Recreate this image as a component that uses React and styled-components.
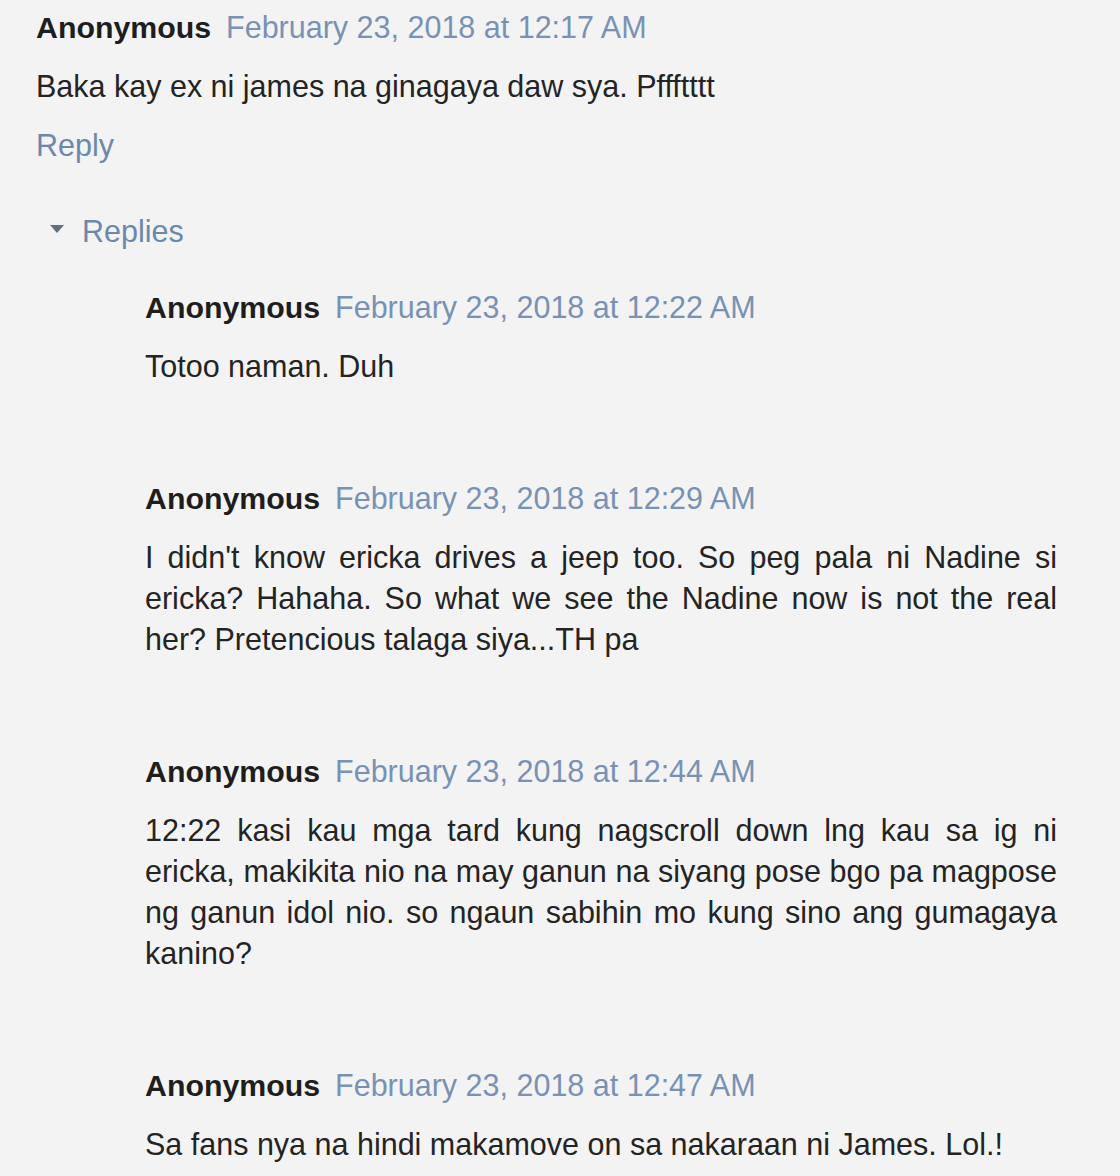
import React from "react";
import styled, { createGlobalStyle } from "styled-components";

const GlobalStyle = createGlobalStyle`
  html, body {
    margin: 0;
    padding: 0;
    background: #f3f3f3;
  }
  body {
    font-family: "Liberation Sans", Arial, sans-serif;
    color: #222;
  }
`;

const Thread = styled.div`
  width: 1120px;
  min-height: 1176px;
  padding: 7px 63px 0 36px;
  box-sizing: border-box;
  background: #f3f3f3;
  overflow: hidden;
`;

const Comment = styled.div`
  display: flex;
  flex-direction: column;
  margin-bottom: ${(p) => p.$gap || 0}px;
`;

const Header = styled.div`
  display: flex;
  align-items: baseline;
  gap: 15px;
  line-height: 41px;
  white-space: nowrap;
`;

const Author = styled.span`
  font-weight: bold;
  font-size: 30.3px;
  color: #1e1e1e;
`;

const Stamp = styled.a`
  font-size: 30.5px;
  color: #7892b5;
  text-decoration: none;
`;

const Body = styled.p`
  margin: 18px 0 0;
  font-size: 30.5px;
  line-height: 41px;
  color: #242424;
  text-align: ${(p) => (p.$justify ? "justify" : "left")};
`;

const ReplyLink = styled.a`
  display: block;
  margin-top: 18px;
  font-size: 30.5px;
  line-height: 41px;
  color: #6b88ad;
  text-decoration: none;
`;

const RepliesToggle = styled.div`
  display: flex;
  align-items: center;
  gap: 18px;
  margin: 45px 0 35px 14px;
  font-size: 30.5px;
  line-height: 41px;
  color: #6b88ad;
`;

const Caret = styled.span`
  width: 0;
  height: 0;
  border-left: 7px solid transparent;
  border-right: 7px solid transparent;
  border-top: 8px solid #5f6f80;
  margin-top: -6px;
`;

const Nested = styled.div`
  padding-left: 109px;
`;

const replies = [
  { time: "12:22 AM", text: "Totoo naman. Duh" },
  {
    time: "12:29 AM",
    text:
      "I didn't know ericka drives a jeep too. So peg pala ni Nadine si ericka? Hahaha. So what we see the Nadine now is not the real her? Pretencious talaga siya...TH pa",
  },
  {
    time: "12:44 AM",
    text:
      "12:22 kasi kau mga tard kung nagscroll down lng kau sa ig ni ericka, makikita nio na may ganun na siyang pose bgo pa magpose ng ganun idol nio. so ngaun sabihin mo kung sino ang gumagaya kanino?",
  },
  {
    time: "12:47 AM",
    text: "Sa fans nya na hindi makamove on sa nakaraan ni James. Lol.!",
  },
];

const App = () => {
  return (
    <Thread>
      <GlobalStyle />
      <Comment>
        <Header>
          <Author>Anonymous</Author>
          <Stamp href="#">February 23, 2018 at 12:17 AM</Stamp>
        </Header>
        <Body>Baka kay ex ni james na ginagaya daw sya. Pffftttt</Body>
        <ReplyLink href="#">Reply</ReplyLink>
      </Comment>
      <RepliesToggle>
        <Caret />
        Replies
      </RepliesToggle>
      <Nested>
        {replies.map((r, i) => (
          <Comment key={r.time} $gap={i < replies.length - 1 ? 91 : 0}>
            <Header>
              <Author>Anonymous</Author>
              <Stamp href="#">February 23, 2018 at {r.time}</Stamp>
            </Header>
            <Body $justify>{r.text}</Body>
          </Comment>
        ))}
      </Nested>
    </Thread>
  );
};

export default App;
